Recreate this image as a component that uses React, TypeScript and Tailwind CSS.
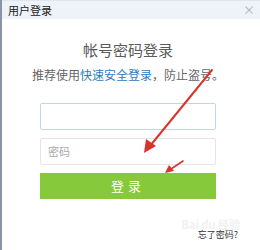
export default function App() {
  return (
    <div
      className="relative w-[260px] h-[250px] overflow-hidden bg-white flex"
      style={{ fontFamily: '"Noto Sans CJK SC", "Liberation Sans", sans-serif' }}
    >
      <div className="w-[2px] h-full bg-[#8a94a6] shrink-0" />
      <div className="flex-1 flex flex-col">
        <div className="h-[19px] bg-[#eef3fa] flex items-center justify-between pl-[6px] pr-[5px] border-t border-[#dfe6f0]">
          <span className="text-[11px] leading-none text-[#222]">用户登录</span>
          <span className="text-[12px] leading-none text-[#aab2bb]">×</span>
        </div>
        <div className="flex flex-col pl-[38px] pr-[44px]">
          <div className="mt-[23px] text-center text-[15px] leading-[16px] text-[#5a5a5a]">帐号密码登录</div>
          <div className="mt-[10px] text-center text-[12px] leading-[14px] text-[#666] whitespace-nowrap -mx-[10px]">
            推荐使用<span className="text-[#2b7bc4]">快速安全登录</span>，防止盗号。
          </div>
          <div className="mt-[21px] h-[27px] rounded-[2px] border border-[#bfd6ea]" />
          <div className="mt-[8px] h-[27px] rounded-[2px] border border-[#e3e6ea] flex items-center pl-[7px] text-[11px] text-[#aaa]">
            密码
          </div>
          <div className="mt-[8px] h-[26px] bg-[#86c93a] flex items-center justify-center text-white text-[13px] tracking-[4px]">
            登录
          </div>
          <div className="relative mt-[24px] flex justify-end -mr-[22px]">
            <span className="absolute -right-[2px] -top-[4px] text-[11px] leading-none text-[#f1f1f1] font-bold">Bai du 经验</span>
            <span className="relative mt-[7px] text-[9px] leading-none text-[#333]">忘了密码?</span>
          </div>
        </div>
      </div>
      <svg className="absolute left-0 top-0 pointer-events-none" width="260" height="250" viewBox="0 0 260 250">
        <line x1="212" y1="70" x2="150" y2="146" stroke="#d9342b" strokeWidth="2" strokeLinecap="round" />
        <polygon points="144,153 146,139 156,146" fill="#d9342b" />
        <line x1="183" y1="161" x2="171" y2="169" stroke="#d9342b" strokeWidth="1.6" strokeLinecap="round" />
        <polygon points="165,173 169,165 174,171" fill="#d9342b" />
      </svg>
    </div>
  );
}
